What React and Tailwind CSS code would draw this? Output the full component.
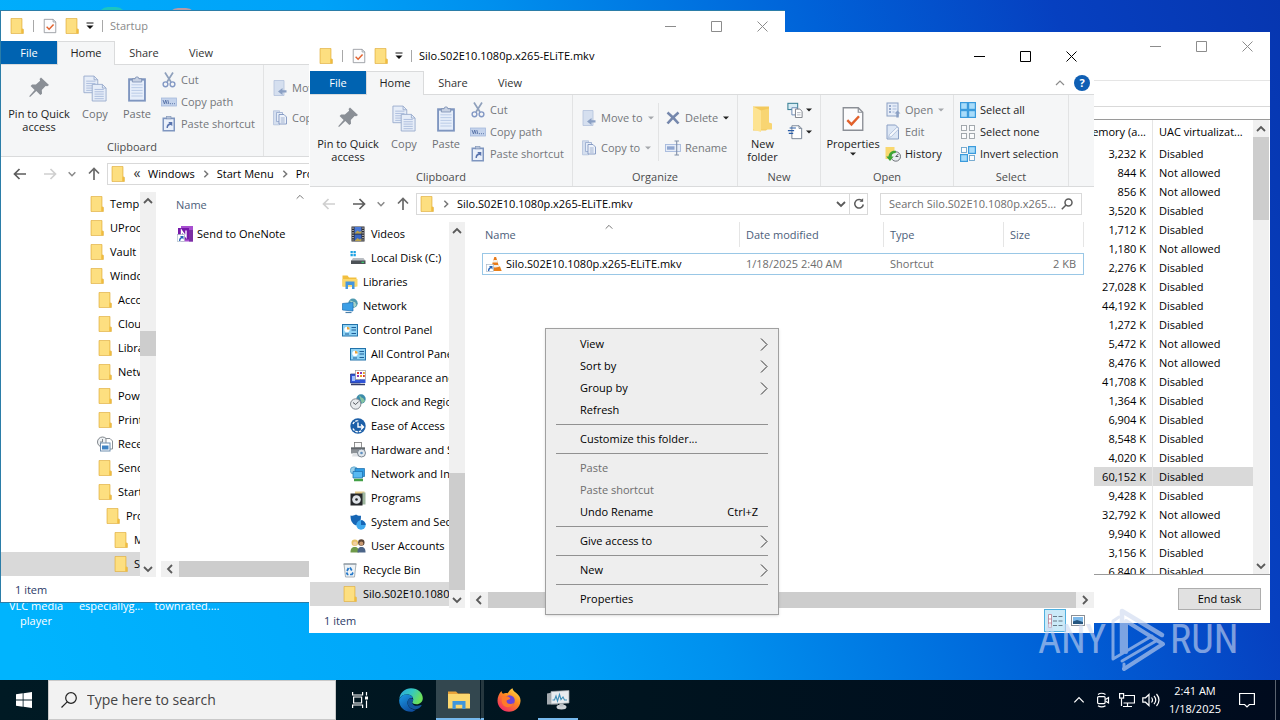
import React from 'react';

/* ---------- small icons ---------- */

function Folder({ className = 'w-4 h-4' }) {
  return (
    <svg viewBox="0 0 16 16" className={className} aria-hidden="true">
      <path d="M2 0.5h11v10.2l1.4 0.6v4.2H2z" fill="#f8d266" />
      <path d="M2.5 1h9.8v14h-9.8z" fill="#fddf80" />
      <path d="M12.3 10.5l1.8 1v3.8h-1.8z" fill="#f1bd3e" />
      <path d="M2 0.5h11v10.2l1.4 0.6v4.2H2z" fill="none" stroke="#e3b54a" strokeWidth="0.7" />
    </svg>
  );
}

function PropsIcon({ className = 'w-4 h-4' }) {
  return (
    <svg viewBox="0 0 16 18" className={className} aria-hidden="true">
      <path d="M1.5 1.5h10l3 3v12h-13z" fill="#fcfcfd" stroke="#8b8f96" strokeWidth="0.9" />
      <path d="M11.5 1.5v3h3" fill="none" stroke="#8b8f96" strokeWidth="0.8" />
      <path d="M4.2 9.8l2.8 2.8 5-5.4" fill="none" stroke="#e2612c" strokeWidth="1.6" />
    </svg>
  );
}

function PinIcon() {
  return (
    <svg viewBox="0 0 24 24" className="w-6 h-6" aria-hidden="true">
      <path d="M14 2.5L22 10l-1.8 1.3-1.6-.4-3.8 4.2.2 3.6-1.7 1.4-4-4L3 22l-.8-.7 5.4-6.4-4-3.8 1.5-1.6 3.8.1 4.2-3.8-.5-1.7z" fill="#8a8f96" />
    </svg>
  );
}

function SheetLines({ x, y }) {
  return (
    <g>
      <path d={`M${x} ${y}h11l4 4v14h-15z`} fill="#e6edf8" stroke="#9aaccd" strokeWidth="1" />
      <path d={`M${x + 11} ${y}v4h4`} fill="none" stroke="#9aaccd" strokeWidth="1" />
      <path d={`M${x + 2.5} ${y + 5.5}h10M${x + 2.5} ${y + 8}h10M${x + 2.5} ${y + 10.5}h10M${x + 2.5} ${y + 13}h10M${x + 2.5} ${y + 15.5}h10`} stroke="#a9bbdb" strokeWidth="1" />
    </g>
  );
}

function CopyIcon() {
  return (
    <svg viewBox="0 0 26 30" className="w-6 h-7" aria-hidden="true">
      <SheetLines x={1} y={1} />
      <SheetLines x={10} y={10} />
    </svg>
  );
}

function PasteIcon() {
  return (
    <svg viewBox="0 0 22 30" className="w-6 h-7" aria-hidden="true">
      <rect x="1.5" y="3.5" width="19" height="25" fill="#7f96c0" />
      <rect x="3.5" y="6" width="15" height="20.5" fill="#e6eefa" />
      <path d="M5 10.5h12M5 13.5h12M5 16.5h12M5 19.5h12M5 22.5h12" stroke="#b8c9e6" strokeWidth="1" />
      <path d="M6 4h3a2 2 0 0 1 4 0h3v3.5H6z" fill="#c8d2e4" stroke="#7388ad" strokeWidth="0.8" />
    </svg>
  );
}

function CutIcon() {
  return (
    <svg viewBox="0 0 16 16" className="w-4 h-4" aria-hidden="true">
      <path d="M4 0.5L10 10M12 0.5L6 10" stroke="#8fa0bc" strokeWidth="1.7" fill="none" />
      <circle cx="4.5" cy="12.3" r="2.4" fill="none" stroke="#8398c4" strokeWidth="1.4" />
      <circle cx="11.5" cy="12.3" r="2.4" fill="none" stroke="#8398c4" strokeWidth="1.4" />
    </svg>
  );
}

function CopyPathIcon() {
  return (
    <svg viewBox="0 0 16 16" className="w-4 h-4" aria-hidden="true">
      <rect x="0.5" y="4" width="15" height="8" fill="#c4d3ec" stroke="#a5b9dc" strokeWidth="0.8" />
      <path d="M2 6l1.5 4 1.2-4 1.3 4M6.8 6l1 4M9 9.7h1M11 9.7h1M13 9.7h1" stroke="#556fa5" strokeWidth="0.9" fill="none" />
    </svg>
  );
}

function PasteShortcutIcon() {
  return (
    <svg viewBox="0 0 16 16" className="w-4 h-4" aria-hidden="true">
      <rect x="1.5" y="1.5" width="12.5" height="14" fill="#7f96c0" />
      <rect x="3" y="3.2" width="9.5" height="10.8" fill="#eaf0fa" />
      <rect x="5.5" y="0.3" width="4.5" height="2.6" fill="#b6c3da" stroke="#7388ad" strokeWidth="0.5" />
      <path d="M5.5 12c0-3 1.200-4.200 3-4.400L7.300 6h4v4L9.800 8.900C7.700 9.200 6.900 10.300 6.900 12z" fill="#5873ad" />
    </svg>
  );
}

function MoveToIcon() {
  return (
    <svg viewBox="0 0 16 16" className="w-4 h-4" aria-hidden="true">
      <path d="M2 0.5h10v15H2z" fill="#d5dfef" stroke="#b3c2dc" strokeWidth="0.8" />
      <path d="M14.5 10.2v2.4h-4v2.3L6 11.4 10.5 8v2.2z" fill="#8ba0c4" />
    </svg>
  );
}

function CopyToIcon() {
  return (
    <svg viewBox="0 0 16 16" className="w-4 h-4" aria-hidden="true">
      <path d="M1.5 0.8h6v14h-6z" fill="#d5dfef" stroke="#b3c2dc" strokeWidth="0.8" />
      <path d="M4.5 2.5h6v9h-6z" fill="#e6edf8" stroke="#93a7cc" strokeWidth="0.8" />
      <path d="M7 4.5h5l2.5 2.5v7H7z" fill="#eef3fb" stroke="#7f95bf" strokeWidth="0.9" />
      <path d="M8.7 8h4M8.7 10h4M8.7 12h4" stroke="#8ba0c4" strokeWidth="0.8" />
    </svg>
  );
}

function DeleteIcon() {
  return (
    <svg viewBox="0 0 16 16" className="w-4 h-4" aria-hidden="true">
      <path d="M2.5 2.5C6 5.5 10.5 10 13.5 13.5M13.5 2.5C10 5.5 5.5 10 2.5 13.5" stroke="#7587ac" strokeWidth="2.6" fill="none" />
    </svg>
  );
}

function RenameIcon() {
  return (
    <svg viewBox="0 0 16 16" className="w-4 h-4" aria-hidden="true">
      <rect x="0.5" y="4.5" width="15" height="7" fill="#e6edf8" stroke="#a5b9dc" strokeWidth="0.9" />
      <rect x="2" y="6.3" width="7.5" height="3.4" fill="#8fa6d0" />
      <path d="M9.5 1h4.5M11.7 1v14M9.5 15h4.5" stroke="#7f8ea8" strokeWidth="1.1" />
    </svg>
  );
}

function BigFolder() {
  return (
    <svg viewBox="0 0 24 28" className="w-6 h-7" aria-hidden="true">
      <path d="M2 1.5h16v21l-3 3H2z" fill="#f3c95c" />
      <path d="M2 1.5l8 4v21.5l-8-2.5z" fill="#fde391" />
      <path d="M10 5.5l8-2v14l3 1v6h-11z" fill="#f8d572" />
    </svg>
  );
}

function NewItemIcon() {
  return (
    <svg viewBox="0 0 18 18" className="w-4 h-4" aria-hidden="true">
      <rect x="1" y="1.5" width="11" height="7" fill="#d8ecf4" stroke="#3c8296" strokeWidth="1.2" />
      <path d="M5.5 6.5h6v8h-6z" fill="#fff" stroke="#5d7fae" strokeWidth="1" />
      <path d="M9.5 8h5l2.5 2.5v7H9.5z" fill="#fff" stroke="#72777f" strokeWidth="1" />
      <path d="M11.3 12h4M11.3 14.5h4" stroke="#8e97a5" strokeWidth="0.8" />
    </svg>
  );
}

function EasyAccessIcon() {
  return (
    <svg viewBox="0 0 18 18" className="w-4 h-4" aria-hidden="true">
      <path d="M5.5 2h8l3 3v11.5h-11z" fill="#fff" stroke="#6d7a8c" strokeWidth="1" />
      <path d="M13.5 2v3h3" fill="none" stroke="#6d7a8c" strokeWidth="0.9" />
      <path d="M3 4.5h7M1 7.5h7M2 10.5h5" stroke="#2a5ea8" strokeWidth="1.4" />
    </svg>
  );
}

function OpenIcon() {
  return (
    <svg viewBox="0 0 16 16" className="w-4 h-4" aria-hidden="true">
      <rect x="2" y="1" width="11" height="13" fill="#e6edf8" stroke="#8ba0c4" strokeWidth="1" />
      <path d="M4 4h2M4 7h2M4 10h2" stroke="#7f95bf" strokeWidth="1.6" />
      <path d="M7.5 4h4M7.5 7h4M7.5 10h2" stroke="#a9bbdb" strokeWidth="1" />
      <path d="M12.5 8.5l3 3h-1.8v4h-2.4v-4H9.5z" fill="#8ba0c4" />
    </svg>
  );
}

function EditIcon() {
  return (
    <svg viewBox="0 0 16 16" className="w-4 h-4" aria-hidden="true">
      <path d="M2 1h8.500l3 3v11H2z" fill="#dde7f5" stroke="#8ba0c4" strokeWidth="1" />
      <path d="M3.500 13.500l1-3L12 3.200l1.800 1.700L6.300 12.600z" fill="#f6f9fd" stroke="#9db0d1" strokeWidth="0.7" />
    </svg>
  );
}

function HistoryIcon() {
  return (
    <svg viewBox="0 0 16 16" className="w-4 h-4" aria-hidden="true">
      <path d="M0.500 1h9v12h-9z" fill="#f9d86f" />
      <circle cx="10.800" cy="10.500" r="4.700" fill="#e9ecef" stroke="#62676e" strokeWidth="0.9" />
      <path d="M10.800 10.500l2.500-2.500M10.800 10.500h2.600" stroke="#44484e" strokeWidth="0.9" />
      <path d="M11 4.800C6.500 4 4 6.800 3.500 10.500H1.200L5 15l3.700-4.500H6.300c.3-2.200 1.800-3.600 4.400-3.500z" fill="#3fa535" />
    </svg>
  );
}

function SelectIcon({ kind }) {
  const on = kind === 'all' ? [1, 1, 1, 1] : kind === 'none' ? [0, 0, 0, 0] : [0, 1, 1, 0];
  const spots = [[1, 1], [9, 1], [1, 9], [9, 9]];
  return (
    <svg viewBox="0 0 16 16" className="w-4 h-4" aria-hidden="true">
      {spots.map(([x, y], i) => (
        <rect key={i} x={on[i] ? x - 0.4 : x + 0.5} y={on[i] ? y - 0.4 : y + 0.5} width={on[i] ? 6.8 : 5} height={on[i] ? 6.8 : 5}
          fill={on[i] ? '#a9dcfa' : '#fbfcfd'} stroke={on[i] ? '#3b9bdc' : kind === 'invert' ? '#6ba4cc' : '#9aa0a6'} strokeWidth={on[i] ? 1.2 : 0.9} />
      ))}
    </svg>
  );
}

function Chevron({ dir = 'right', className = 'w-3 h-3', stroke = '#5a5a5a', weight = 1.4 }) {
  const d = {
    right: 'M4 2l4 4-4 4',
    left: 'M8 2L4 6l4 4',
    up: 'M2 8l4-4 4 4',
    down: 'M2 4l4 4 4-4',
  }[dir];
  return (
    <svg viewBox="0 0 12 12" className={className} aria-hidden="true">
      <path d={d} fill="none" stroke={stroke} strokeWidth={weight} />
    </svg>
  );
}

function Caret({ color = '#222' }) {
  return (
    <svg viewBox="0 0 8 8" className="w-2 h-2" aria-hidden="true">
      <path d="M1 2.500h6L4 5.500z" fill={color} />
    </svg>
  );
}

function NavArrow({ dir, color }) {
  const d = { left: 'M14 8H2.500M7.500 3L2.500 8l5 5', right: 'M2 8h11.500M8.500 3l5 5-5 5', up: 'M8 14V3M3 7.500L8 2.500l5 5' }[dir];
  return (
    <svg viewBox="0 0 16 16" className="w-4 h-4" aria-hidden="true">
      <path d={d} fill="none" stroke={color} strokeWidth="1.7" />
    </svg>
  );
}

/* ---------- navigation tree icons ---------- */

const treeArt = {
  recent: (
    <>
      <circle cx="5.500" cy="6" r="5" fill="#eef1f3" stroke="#80868c" />
      <path d="M5.500 3v3H3" stroke="#80868c" fill="none" />
      <path d="M9 2.500h4l2.500 2.500v8H9z" fill="#fff" stroke="#8b9096" />
      <rect x="3.500" y="7" width="9.500" height="8" fill="#fff" stroke="#6f8fb0" />
      <rect x="5" y="9.500" width="6.500" height="4" fill="#3f83c4" />
    </>
  ),
  videos: (
    <>
      <rect x="1.500" y="0.500" width="13" height="15" fill="#2b2b30" />
      <rect x="4.500" y="1" width="7" height="6.500" fill="#4a78d6" />
      <rect x="4.500" y="8.500" width="7" height="6.500" fill="#3a66c4" />
      <path d="M4.500 7.500l3-3 2 1.500 2-1v2.500zM4.500 15l3-3 2 1.500 2-1V15z" fill="#b9a04a" />
      <path d="M3 1.500v13M13 1.500v13" stroke="#e6e6e6" strokeWidth="1.2" strokeDasharray="1.2 1.2" />
    </>
  ),
  disk: (
    <>
      <path d="M0.500 1h2.300v2.300H0.500zM3.500 1h2.300v2.300H3.500zM0.500 4h2.300v2.300H0.500zM3.500 4h2.300v2.300H3.500z" fill="#1ba1e2" />
      <path d="M3 8h10.500l2 3H1z" fill="#b9bdc2" />
      <rect x="1" y="10.500" width="14.500" height="3.500" fill="#4c5156" />
      <rect x="11.500" y="11.700" width="2.500" height="1.200" fill="#3bd16f" />
    </>
  ),
  libraries: (
    <>
      <path d="M0.500 1.500h5l1.500 2h7.500v9H0.500z" fill="#f2bf3e" />
      <path d="M0.500 5h15v7.500h-15z" fill="#fbd86d" />
      <path d="M3.500 7.500h9v7.500h-2.500v-4h-4v4H3.500z" fill="#4596de" />
    </>
  ),
  network: (
    <>
      <circle cx="11" cy="5.200" r="4.700" fill="#4f9ab0" />
      <path d="M8 2.500c2 0 3 2 5 1.500l1.500 3-2 2.500-3-3z" fill="#a9d3c8" />
      <path d="M0.500 5.500l10.500-1v8.500L0.500 12z" fill="#3b9fe6" stroke="#1c6fb3" strokeWidth="0.7" />
      <path d="M3.500 14.500h6" stroke="#4a7fa8" strokeWidth="1.2" />
    </>
  ),
  control: (
    <>
      <rect x="0.500" y="2.500" width="15" height="11.500" fill="#8ed2f4" stroke="#2272aa" />
      <circle cx="5" cy="7.500" r="2.700" fill="#fff" />
      <path d="M5 7.500V4.800a2.700 2.700 0 0 1 2.700 2.700z" fill="#e8a33a" />
      <path d="M9.500 5.500h4.500M9.500 8h4.500M3 12h4M9.500 11.500h4.500" stroke="#1f5f99" strokeWidth="1.2" />
    </>
  ),
  appearance: (
    <>
      <path d="M0.500 4h10v9h-10z" fill="#2f54d6" stroke="#20307c" strokeWidth="0.7" />
      <path d="M2 6h3v5H2z" fill="#9fc0ff" />
      <rect x="5.500" y="0.500" width="10" height="9" fill="#fff" stroke="#999" strokeWidth="0.7" />
      <path d="M7 2h2v2H7zM13 5h1.800v2H13z" fill="#d93a2b" />
      <path d="M10 2h2v2h-2zM7 5h2v2H7z" fill="#8a3bb8" />
      <path d="M13 2h1.800v2H13zM10 5h2v2h-2z" fill="#e89d27" />
      <path d="M10 9.500h5.500v3.500H10z" fill="#2f54d6" />
      <path d="M1 14.500h14" stroke="#333b66" strokeWidth="1.5" />
    </>
  ),
  clock: (
    <>
      <circle cx="11" cy="5" r="4.700" fill="#3c8cab" />
      <path d="M9 1.500c2 .5 2 2.500 4 2.500l2 3-3 2.500z" fill="#88c4a0" />
      <circle cx="5.700" cy="10" r="5.200" fill="#e8ebee" stroke="#83898f" />
      <path d="M3 8.500l2.700 2 3-3" stroke="#54595f" fill="none" />
    </>
  ),
  ease: (
    <>
      <circle cx="8" cy="8" r="7.700" fill="#1c5fa8" />
      <path d="M3 6A5.500 5.500 0 0 1 9 2.700M3 10.500A5.500 5.500 0 0 0 12 12" stroke="#fff" strokeWidth="1.4" fill="none" strokeDasharray="2.500 1" />
      <path d="M8 4.500V9h5M11 6.500L13.500 9 11 11.500" stroke="#fff" strokeWidth="1.4" fill="none" />
    </>
  ),
  hardware: (
    <>
      <rect x="4.500" y="0.500" width="7" height="5.500" fill="#fafafa" stroke="#777" strokeWidth="0.8" />
      <path d="M1 5.500h14v6H1z" fill="#8d9297" />
      <path d="M1 5.500h14v1.800H1z" fill="#61666b" />
      <path d="M3 11h7v3.500H2z" fill="#dfe2e5" />
      <circle cx="11.500" cy="11" r="4" fill="#dfe6ec" stroke="#6f7a86" strokeWidth="0.9" />
      <circle cx="11.500" cy="11" r="1.300" fill="#5f8fc0" />
    </>
  ),
  netint: (
    <>
      <circle cx="4" cy="4.500" r="3.700" fill="#9bd0ea" stroke="#4b98c4" strokeWidth="0.7" />
      <path d="M5 2.500h9.500v8H5z" fill="#2d9be3" stroke="#1a6cab" strokeWidth="0.7" />
      <path d="M3 5.500h9.500v6.500H3z" fill="#58b9f2" stroke="#1a6cab" strokeWidth="0.7" />
      <path d="M4 14h9" stroke="#43a047" strokeWidth="2.5" />
    </>
  ),
  programs: (
    <>
      <path d="M5 1.500h9.500v12H5z" fill="#e3c987" />
      <path d="M12 2.500h3.500v12H12z" fill="#9fb7a0" />
      <rect x="0.500" y="3.500" width="12" height="12" fill="#26282b" />
      <circle cx="6.500" cy="9.500" r="4.300" fill="#dfe3e8" />
      <circle cx="6.500" cy="9.500" r="1.300" fill="#26282b" />
    </>
  ),
  system: (
    <>
      <path d="M0.500 1.500C3 2 4.500 1.500 6 0.500c1.500 1 3 1.500 5 1.200 0 5-1 8-5 9.800C2 9.700.500 6.500.500 1.500z" fill="#1766b5" />
      <circle cx="11" cy="11" r="4.700" fill="#3fa9ee" />
      <path d="M11 11V6.300a4.700 4.700 0 0 1 4.700 4.700z" fill="#1766b5" />
    </>
  ),
  users: (
    <>
      <circle cx="4.800" cy="4.800" r="3.300" fill="#e6c36a" />
      <circle cx="5" cy="5.500" r="2" fill="#f0cfa6" />
      <path d="M0.500 14.500c0-4 1.500-5.500 4.300-5.500s4 1.500 4 5.500z" fill="#6f9a4a" />
      <circle cx="11.300" cy="4.500" r="3.200" fill="#5a4334" />
      <circle cx="11.300" cy="5.500" r="2" fill="#c99a72" />
      <path d="M7.500 14.500c0-4 1.200-5.500 3.900-5.500s4.100 1.500 4.100 5.500z" fill="#4b6487" />
    </>
  ),
  bin: (
    <>
      <path d="M2 2h12l-1.500 13h-9z" fill="#eef3f6" stroke="#9fa9b1" strokeWidth="0.9" />
      <path d="M1.500 2h13" stroke="#8c969e" strokeWidth="1.2" />
      <path d="M8 5.500l1.800 3M11 10.500l-1 2H8M6.500 12.500h-1l-1-2M5 9l1.500-3" stroke="#2377c9" strokeWidth="1.7" fill="none" />
    </>
  ),
};

function TreeIcon({ name }) {
  if (name === 'folder') return <Folder className="w-4 h-4 shrink-0" />;
  return (
    <svg viewBox="0 0 16 16" className="w-4 h-4 shrink-0" aria-hidden="true">
      {treeArt[name]}
    </svg>
  );
}

/* ---------- window pieces ---------- */

function CaptionButtons({ color }) {
  const marks = [
    ['Minimize', <path key="p" d="M0 6.500h11" />],
    ['Maximize', <path key="p" d="M0.500 1.500h10v10h-10z" />],
    ['Close', <path key="p" d="M0.500 1.500l10 10M10.500 1.500l-10 10" />],
  ];
  return (
    <div className="ml-auto flex self-stretch">
      {marks.map(([label, mark]) => (
        <button key={label} type="button" aria-label={label} className="flex w-[46px] items-center justify-center">
          <svg viewBox="0 0 11 13" className="h-[13px] w-[11px]" fill="none" stroke={color} strokeWidth="1" aria-hidden="true">
            {mark}
          </svg>
        </button>
      ))}
    </div>
  );
}

function TitleBar({ title, active }) {
  return (
    <header className="flex h-[30px] shrink-0 items-center pl-2">
      <Folder className="h-4 w-4" />
      <span className="ml-2 h-3 w-px bg-[#a8a8a8]" />
      <button type="button" aria-label="Properties" className="ml-2 flex w-4 justify-center"><PropsIcon /></button>
      <button type="button" aria-label="New folder" className="ml-1.5"><Folder className="h-4 w-4" /></button>
      <button type="button" aria-label="Customize Quick Access Toolbar" className="ml-1.5">
        <svg viewBox="0 0 8 8" className="h-2 w-2" aria-hidden="true">
          <path d="M0.500 1h7" stroke="#111" />
          <path d="M0.500 3.500h7L4 7z" fill="#111" />
        </svg>
      </button>
      <span className="ml-2 h-3 w-px bg-[#a8a8a8]" />
      <h1 className={active ? 'ml-[7px] whitespace-nowrap text-black' : 'ml-[7px] whitespace-nowrap text-[#8a8a8a]'}>{title}</h1>
      <CaptionButtons color={active ? '#000' : '#8c8c8c'} />
    </header>
  );
}

function TabStrip() {
  return (
    <nav className="flex h-6 shrink-0 items-stretch border-b border-[#dadbdc]">
      <button type="button" className="w-14 bg-[#0063b1] text-white">File</button>
      <button type="button" className="-mb-px w-[58px] border-x border-t border-[#dadbdc] bg-[#f5f6f7] pb-0.5 text-[#222]">Home</button>
      <button type="button" className="w-[58px] text-[#333]">Share</button>
      <button type="button" className="w-14 text-[#333]">View</button>
      <div className="ml-auto flex items-center gap-2 pr-1">
        <button type="button" aria-label="Minimize the Ribbon"><Chevron dir="up" stroke="#8c8c8c" weight={1.2} /></button>
        <button type="button" aria-label="Help" className="flex h-4 w-4 items-center justify-center rounded-full bg-[#0f5fb4] font-bold text-white">?</button>
      </div>
    </nav>
  );
}

function Group({ label, width, children }) {
  return (
    <section className={`flex shrink-0 flex-col border-r border-[#e2e3e4] ${width}`}>
      <div className="flex flex-1">{children}</div>
      <p className="pb-px text-center leading-4 text-[#4c4c4c]">{label}</p>
    </section>
  );
}

function BigButton({ icon, lines, width, muted, caret }) {
  return (
    <button type="button" className={`flex shrink-0 flex-col items-center justify-start pt-2.5 leading-[13px] ${width} ${muted ? 'text-[#6d7074]' : 'text-[#222]'}`}>
      <span className="flex h-8 items-start">{icon}</span>
      {lines.map((l) => <span key={l} className="whitespace-nowrap">{l}</span>)}
      {caret && <Caret />}
    </button>
  );
}

function SmallButton({ icon, label, muted, caret, caretColor }) {
  return (
    <button type="button" className={`flex h-[22px] items-center gap-1 whitespace-nowrap ${muted ? 'text-[#74777b]' : 'text-[#222]'}`}>
      {icon}
      <span>{label}</span>
      {caret && <Caret color={caretColor} />}
    </button>
  );
}

function Ribbon() {
  return (
    <div className="flex h-[92px] shrink-0 border-b border-[#dadbdc] bg-[#f5f6f7]">
      <Group label="Clipboard" width="w-[263px]">
        <BigButton icon={<PinIcon />} lines={['Pin to Quick', 'access']} width="w-[76px]" />
        <BigButton icon={<CopyIcon />} lines={['Copy']} width="w-[36px]" muted />
        <BigButton icon={<PasteIcon />} lines={['Paste']} width="w-[48px]" muted />
        <div className="pt-1">
          <SmallButton icon={<CutIcon />} label="Cut" muted />
          <SmallButton icon={<CopyPathIcon />} label="Copy path" muted />
          <SmallButton icon={<PasteShortcutIcon />} label="Paste shortcut" muted />
        </div>
      </Group>
      <Group label="Organize" width="w-[165px]">
        <div className="my-2 w-[86px] space-y-2 border-r border-[#e2e3e4] pl-2 pt-1">
          <SmallButton icon={<MoveToIcon />} label="Move to" muted caret caretColor="#a5a8ac" />
          <SmallButton icon={<CopyToIcon />} label="Copy to" muted caret caretColor="#a5a8ac" />
        </div>
        <div className="my-2 space-y-2 pl-1.5 pt-1">
          <SmallButton icon={<DeleteIcon />} label="Delete" muted caret />
          <SmallButton icon={<RenameIcon />} label="Rename" muted />
        </div>
      </Group>
      <Group label="New" width="w-[83px]">
        <BigButton icon={<BigFolder />} lines={['New', 'folder']} width="w-[49px]" />
        <div className="pt-1">
          <button type="button" aria-label="New item" className="flex h-[22px] items-center gap-0.5"><NewItemIcon /><Caret /></button>
          <button type="button" aria-label="Easy access" className="flex h-[22px] items-center gap-0.5"><EasyAccessIcon /><Caret /></button>
        </div>
      </Group>
      <Group label="Open" width="w-[133px]">
        <BigButton icon={<PropsIcon className="h-7 w-6" />} lines={['Properties']} width="w-16" caret />
        <div className="pt-1">
          <SmallButton icon={<OpenIcon />} label="Open" muted caret caretColor="#a5a8ac" />
          <SmallButton icon={<EditIcon />} label="Edit" muted />
          <SmallButton icon={<HistoryIcon />} label="History" />
        </div>
      </Group>
      <Group label="Select" width="w-[115px]">
        <div className="pl-1.5 pt-1">
          <SmallButton icon={<SelectIcon kind="all" />} label="Select all" />
          <SmallButton icon={<SelectIcon kind="none" />} label="Select none" />
          <SmallButton icon={<SelectIcon kind="invert" />} label="Invert selection" />
        </div>
      </Group>
    </div>
  );
}

function AddressBar({ crumbs, search, back, searchId }) {
  return (
    <div className="flex h-[33px] shrink-0 items-center pr-3">
      <div className="flex w-[106px] shrink-0 items-center pl-[11px]">
        <button type="button" aria-label="Back" className="w-[30px]"><NavArrow dir="left" color={back ? '#5c5c5c' : '#cfcfcf'} /></button>
        <button type="button" aria-label="Forward" className="w-[25px]"><NavArrow dir="right" color={back ? '#cfcfcf' : '#5c5c5c'} /></button>
        <button type="button" aria-label="Recent locations" className="w-[19px]"><Chevron dir="down" className="h-2.5 w-2.5" stroke="#888" weight={1.8} /></button>
        <button type="button" aria-label="Up"><NavArrow dir="up" color="#6a6a6a" /></button>
      </div>
      <div className="flex h-[22px] min-w-0 flex-1 items-center border border-[#d9d9d9] pl-0.5">
        <Folder className="h-4 w-4 shrink-0" />
        {crumbs.map((c, i) => (
          <React.Fragment key={c}>
            <span className="flex w-[22px] shrink-0 items-center justify-center text-[#333]">
              {i === 0 && crumbs.length > 1 ? <span className="pb-0.5 text-sm leading-4">«</span> : <Chevron className="h-2.5 w-2.5" stroke="#777" weight={1.8} />}
            </span>
            <a href="#" className="whitespace-nowrap text-black">{c}</a>
          </React.Fragment>
        ))}
        <button type="button" aria-label="Previous locations" className="ml-auto px-0.5"><Chevron dir="down" weight={1.8} /></button>
        <button type="button" aria-label="Refresh" className="flex h-full w-[18px] items-center justify-center border-l border-[#d9d9d9]">
          <svg viewBox="0 0 12 12" className="h-3 w-3" aria-hidden="true">
            <path d="M9.500 3.200A4.300 4.300 0 1 0 10.300 6.500" fill="none" stroke="#5c5c5c" strokeWidth="1.5" />
            <path d="M6.500 3.800h3.600V0.300z" fill="#5c5c5c" />
          </svg>
        </button>
      </div>
      <label htmlFor={searchId} className="ml-3 flex h-[22px] w-[202px] shrink-0 items-center border border-[#d9d9d9] pl-2 pr-2">
        <input id={searchId} type="text" aria-label="Search" placeholder={search} className="min-w-0 flex-1 text-ellipsis bg-transparent outline-none placeholder:text-[#6d6d6d]" />
        <svg viewBox="0 0 12 12" className="ml-1 h-3 w-3 shrink-0" fill="none" stroke="#5c5c5c" strokeWidth="1.5" aria-hidden="true">
          <circle cx="7.500" cy="4.500" r="3.500" />
          <path d="M5 7L0.800 11.200" />
        </svg>
      </label>
    </div>
  );
}

function VScroll({ before, thumb }) {
  return (
    <div className="flex w-4 shrink-0 flex-col bg-[#f0f0f0]">
      <button type="button" aria-label="Scroll up" className="flex h-[17px] items-center justify-center"><Chevron dir="up" weight={1.8} /></button>
      <div className={`shrink-0 ${before}`} />
      <div className={`shrink-0 bg-[#cdcdcd] ${thumb}`} />
      <button type="button" aria-label="Scroll down" className="mt-auto flex h-[17px] items-center justify-center"><Chevron dir="down" weight={1.8} /></button>
    </div>
  );
}

function Tree({ items }) {
  return (
    <ul className="w-[139px] shrink-0 overflow-hidden">
      {items.map(([label, icon, pad, selected]) => (
        <li key={label}>
          <button type="button" className={`flex h-6 w-full items-center gap-[5px] overflow-hidden whitespace-nowrap text-left text-black ${pad} ${selected ? 'bg-[#d9d9d9]' : ''}`}>
            <TreeIcon name={icon} />
            <span>{label}</span>
          </button>
        </li>
      ))}
    </ul>
  );
}

function FileTable({ file, boxed }) {
  return (
    <table className="w-[602px] table-fixed border-separate border-spacing-0 text-left">
      <colgroup>
        <col className="w-[258px]" />
        <col className="w-[144px]" />
        <col className="w-[120px]" />
        <col className="w-20" />
      </colgroup>
      <thead>
        <tr className="h-[25px] text-[#4c607a]">
          <th className="relative border-r border-[#e5e5e5] pl-[3px] font-normal">
            Name
            <span className="absolute inset-x-0 top-0 flex justify-center pr-1"><Chevron dir="up" className="h-2.5 w-2.5" stroke="#777" weight={1.2} /></span>
          </th>
          <th className="border-r border-[#e5e5e5] pl-1.5 font-normal">Date modified</th>
          <th className="border-r border-[#e5e5e5] pl-1.5 font-normal">Type</th>
          <th className="border-r border-[#e5e5e5] pl-1.5 font-normal">Size</th>
        </tr>
      </thead>
      <tbody>
        <tr className="h-1.5"><td colSpan={4} /></tr>
        <tr className={`h-[22px] text-[#6d6d6d] ${boxed ? 'outline-1 -outline-offset-1 outline-[#99c7e6]' : ''}`}>
          <td className="py-0 pl-1">
            <span className="flex items-center gap-1 whitespace-nowrap text-black">{file.icon}{file.name}</span>
          </td>
          <td className="py-0 pl-1.5">{file.date}</td>
          <td className="py-0 pl-1.5">{file.type}</td>
          <td className="py-0 pr-2 text-right">{file.size}</td>
        </tr>
      </tbody>
    </table>
  );
}

function Explorer({ title, active, frame, place, crumbs, search, searchId, back, tree, scroll, file }) {
  return (
    <section aria-label={title} className={`absolute flex h-[593px] w-[785px] flex-col border-l border-t bg-white ${frame} ${place}`}>
      <TitleBar title={title} active={active} />
      <TabStrip />
      <Ribbon />
      <AddressBar crumbs={crumbs} search={search} back={back} searchId={searchId} />
      <div className="flex min-h-0 flex-1 pt-0.5">
        <Tree items={tree} />
        <VScroll {...scroll} />
        <div className="flex min-w-0 flex-1 flex-col pl-[5px]">
          <div className="flex-1 pl-3"><FileTable file={file} boxed={active} /></div>
          <div className="flex h-4 bg-[#f0f0f0]">
            <button type="button" aria-label="Scroll left" className="flex w-[18px] items-center justify-center"><Chevron dir="left" weight={1.8} /></button>
            <div className="flex-1 bg-[#cdcdcd]" />
            <button type="button" aria-label="Scroll right" className="flex w-[18px] items-center justify-center"><Chevron weight={1.8} /></button>
          </div>
        </div>
      </div>
      <footer className="flex h-[25px] shrink-0 items-center pl-3.5 pr-2 text-[#2b3a67]">
        <span>1 item</span>
        <div className="ml-auto flex items-center gap-1">
          <button type="button" aria-label="Details view" className="flex h-[23px] w-[22px] items-center justify-center border border-[#4fb0e0] bg-[#cbeaf8]">
            <svg viewBox="0 0 16 14" className="h-3.5 w-4" aria-hidden="true">
              <path d="M1.500 0.500h3v13h-3z" fill="#fff" stroke="#b77a8e" strokeWidth="0.8" />
              <path d="M1.500 5h3M1.500 9h3" stroke="#b77a8e" strokeWidth="0.8" />
              <path d="M6 2.500h4M11.500 2.500h4M6 7h4M11.500 7h4M6 11.500h4M11.500 11.500h4" stroke="#667a88" />
            </svg>
          </button>
          <button type="button" aria-label="Large icons view" className="flex h-[23px] w-4 items-center justify-center">
            <svg viewBox="0 0 14 11" className="h-[11px] w-3.5" aria-hidden="true">
              <rect x="0.500" y="0.500" width="13" height="10" fill="#fff" stroke="#8a8f96" />
              <rect x="2" y="2" width="10" height="7" fill="#7db9ea" />
              <path d="M2 9V6.500l4-1.500 6 2v2z" fill="#27567f" />
            </svg>
          </button>
        </div>
      </footer>
    </section>
  );
}

/* ---------- task manager ---------- */

const processes = [
  ['3,232 K', 'Disabled'], ['844 K', 'Not allowed'], ['856 K', 'Not allowed'], ['3,520 K', 'Disabled'],
  ['1,712 K', 'Disabled'], ['1,180 K', 'Not allowed'], ['2,276 K', 'Disabled'], ['27,028 K', 'Disabled'],
  ['44,192 K', 'Disabled'], ['1,272 K', 'Disabled'], ['5,472 K', 'Not allowed'], ['8,476 K', 'Not allowed'],
  ['41,708 K', 'Disabled'], ['1,364 K', 'Disabled'], ['6,904 K', 'Disabled'], ['8,548 K', 'Disabled'],
  ['4,020 K', 'Disabled'], ['60,152 K', 'Disabled'], ['9,428 K', 'Disabled'], ['32,792 K', 'Not allowed'],
  ['9,940 K', 'Not allowed'], ['3,156 K', 'Disabled'], ['6,840 K', 'Disabled'],
];

function TaskManager() {
  return (
    <section aria-label="Task Manager" className="absolute left-[770px] top-8 flex h-[591px] w-[500px] flex-col bg-white">
      <header className="flex h-7 shrink-0"><CaptionButtons color="#8c8c8c" /></header>
      <div className="h-[21px] shrink-0 border-b border-[#e5e5e5]" />
      <div className="h-[26px] shrink-0 border-b border-[#d9d9d9]" />
      <div className="h-3 shrink-0" />
      <div className="flex min-h-0 flex-1 border-y border-[#9a9a9a]">
        <div className="min-w-0 flex-1 overflow-hidden">
          <table className="w-full table-fixed border-separate border-spacing-0 text-black">
            <thead>
              <tr className="h-6">
                <th className="w-[383px] border-r border-[#e5e5e5] p-0 pr-1.5 text-right font-normal">Memory (a...</th>
                <th className="p-0 pl-1.5 text-left font-normal">UAC virtualizat...</th>
              </tr>
            </thead>
            <tbody>
              {processes.map(([mem, uac]) => (
                <tr key={mem} className={mem === '60,152 K' ? 'h-[19px] bg-[#d9d9d9]' : 'h-[19px]'}>
                  <td className="border-r border-[#e5e5e5] p-0 pr-1.5 text-right">{mem}</td>
                  <td className="p-0 pl-1.5">{uac}</td>
                </tr>
              ))}
            </tbody>
          </table>
        </div>
        <VScroll before="h-0" thumb="h-[83px]" />
        <div className="w-px" />
      </div>
      <footer className="flex h-12 shrink-0 items-center justify-end pr-[9px]">
        <button type="button" className="h-[22px] w-[83px] border border-[#adadad] bg-[#e1e1e1] text-black">End task</button>
      </footer>
    </section>
  );
}

/* ---------- context menu ---------- */

const menuGroups = [
  [['View', '>'], ['Sort by', '>'], ['Group by', '>'], ['Refresh']],
  [['Customize this folder...']],
  [['Paste', null, true], ['Paste shortcut', null, true], ['Undo Rename', 'Ctrl+Z']],
  [['Give access to', '>']],
  [['New', '>']],
  [['Properties']],
];

function ContextMenu() {
  return (
    <div role="menu" className="absolute left-[545px] top-[328px] w-[234px] border border-[#a0a0a0] bg-[#eeeeee] py-1 shadow-sm">
      {menuGroups.map((items, g) => (
        <div key={g}>
          {g > 0 && <div className="mx-2.5 my-[3px] h-px bg-[#919191]" />}
          {items.map(([label, hint, off]) => (
            <button key={label} role="menuitem" type="button" disabled={off} className="flex h-[22px] w-full items-center justify-between pl-[34px] pr-2.5 text-left text-black disabled:text-[#6d6d6d]">
              <span>{label}</span>
              {hint === '>' && (
                <svg viewBox="0 0 8 13" className="h-[13px] w-2" aria-hidden="true">
                  <path d="M1 0.500l6 6-6 6" fill="none" stroke="#333" strokeWidth="1" />
                </svg>
              )}
              {hint && hint !== '>' && <span className="pr-2.5">{hint}</span>}
            </button>
          ))}
        </div>
      ))}
    </div>
  );
}

/* ---------- taskbar ---------- */

function Taskbar() {
  return (
    <footer className="relative flex h-10 shrink-0 bg-[linear-gradient(90deg,#001a24,#00141f_50%,#000b1e)] text-white">
      <button type="button" aria-label="Start" className="flex w-12 items-center justify-center">
        <svg viewBox="0 0 16 16" className="h-4 w-4" fill="#fff" aria-hidden="true">
          <path d="M0 2.200L6.700 1.300v6.200H0zM7.500 1.200L16 0v7.500H7.500zM0 8.400h6.700v6.300L0 13.800zM7.500 8.400H16V16l-8.500-1.200z" />
        </svg>
      </button>
      <label htmlFor="desktop-search" className="flex w-72 items-center border border-[#c9c9c9] bg-[#f2f2f2] pl-3">
        <svg viewBox="0 0 16 16" className="h-4 w-4" fill="none" stroke="#222" strokeWidth="1.2" aria-hidden="true">
          <circle cx="10" cy="6" r="5.300" />
          <path d="M6.200 9.800L0.500 15.500" />
        </svg>
        <input id="desktop-search" type="text" aria-label="Type here to search" placeholder="Type here to search" className="ml-2.5 min-w-0 flex-1 bg-transparent text-sm text-black outline-none placeholder:text-[#444]" />
      </label>
      <button type="button" aria-label="Task View" className="flex w-12 items-center justify-center">
        <svg viewBox="0 0 16 16" className="h-4 w-4" fill="none" stroke="#fff" strokeWidth="1.2" aria-hidden="true">
          <path d="M0.600 0v3h10V0M0.600 16v-3h10v3M1.600 5h8v6h-8zM14.500 0v3.500M14.500 8.500V16" />
          <path d="M14.500 4.500v3" strokeWidth="3" />
        </svg>
      </button>
      <button type="button" aria-label="Microsoft Edge" className="flex w-[52px] items-center justify-center pl-0.5">
        <svg viewBox="0 0 24 24" className="h-6 w-6" aria-hidden="true">
          <defs>
            <linearGradient id="edgeTop" x1="0" y1="0" x2="1" y2="0.400">
              <stop offset="0" stopColor="#2aa5e0" /><stop offset="0.550" stopColor="#35c8c0" /><stop offset="1" stopColor="#6be05a" />
            </linearGradient>
            <linearGradient id="edgeSwirl" x1="0" y1="0" x2="0.600" y2="1">
              <stop offset="0" stopColor="#1a9be6" /><stop offset="1" stopColor="#0f4fa0" />
            </linearGradient>
          </defs>
          <path d="M0.300 11C1 4.500 6 .2 12 .2c7 0 11.800 4.800 11.800 10 0 3.600-2.800 6-6.300 6-3 0-4.300-1.200-4.300-2 0-.8 1-1 1-3C14.200 8.500 11.500 6.500 8 6.500 4 6.500 1.500 8.500.3 11z" fill="url(#edgeTop)" />
          <path d="M0.200 12C1 8.500 4.200 6.500 8 6.500c3 0 5.500 1.600 6.100 3.700C11 9 8.500 11.500 8.500 14.500c0 4.500 4 7.500 8.500 7-1.500 1.500-3.500 2.300-5 2.300C5 23.800-.2 18.500.2 12z" fill="url(#edgeSwirl)" />
          <path d="M8.500 14.500c0 5 5.500 7.500 9.500 6.500 2-.5 3.500-1.800 4.500-3.300.3-.5-.1-.8-.6-.6-4.500 1.800-8.700.3-8.700-2.900 0-.8 1-1 1-3-.5-.7-1.200-1-2.200-1-2 0-3.500 2-3.500 4.300z" fill="#12579f" />
        </svg>
      </button>
      <button type="button" aria-label="File Explorer" className="flex w-11 items-center justify-center border-b-2 border-[#76b9ed] bg-[#33474f] pl-0.5 pt-0.5">
        <svg viewBox="0 0 22 20" className="h-5 w-[22px]" aria-hidden="true">
          <path d="M0 1.500h8l2 2h11.500v4H0z" fill="#e9a33a" />
          <path d="M0 4h22v14.500H0z" fill="#fbd76f" />
          <path d="M4.500 11h13v8h-3.200v-4.200H7.700V19H4.500z" fill="#3f96dc" />
        </svg>
      </button>
      <span className="w-1 border-b-2 border-l border-[#76b9ed] border-l-[#00141f] bg-[#26383f]" />
      <button type="button" aria-label="Firefox" className="flex w-[50px] items-center justify-center">
        <svg viewBox="0 0 24 24" className="h-6 w-6" aria-hidden="true">
          <defs>
            <linearGradient id="fox" x1="0.900" y1="0" x2="0.200" y2="1">
              <stop offset="0" stopColor="#ffe14a" /><stop offset="0.450" stopColor="#ff8a1e" /><stop offset="1" stopColor="#f0256b" />
            </linearGradient>
          </defs>
          <path d="M4.500 3c.2 1.500.8 2.300 1.500 2.700C7.500 5 9 4.800 10.500 5.200 12 3 13.500 1.500 15.500.300c.3 2 1.500 3 3.500 4.500 3 2.300 4.800 5 4.500 8.500-.5 6-5.300 10.500-11.500 10.500S.500 19 .500 12.800C.500 9 2 5.500 4.500 3z" fill="url(#fox)" />
          <circle cx="12.500" cy="12.500" r="5.300" fill="#6b45d8" />
          <path d="M5 9c3-1.800 6.500-.5 8 1 .8.800-1.200 2-3.200 2.200-1.300 3.500 3.700 5.300 7.200 2.300-1.500 4.500-6 5.500-9 4C5 17 4 13 5 9z" fill="#ff7a2a" />
        </svg>
      </button>
      <button type="button" aria-label="Task Manager" className="mx-1 flex w-10 items-center justify-center border-b-2 border-[#76b9ed] pt-0.5">
        <svg viewBox="0 0 24 22" className="h-[22px] w-6" aria-hidden="true">
          <path d="M1 4.500l11-2v13L1 15.500z" fill="#a4abb0" />
          <path d="M5 2.500l18-1v12.500L5 15z" fill="#e8ecef" stroke="#9aa0a5" strokeWidth="0.7" />
          <path d="M6.500 11h2l1.500-4L11.500 12l2-6.500 1.500 5L17 8l1.500 3H21" fill="none" stroke="#3f8fb8" strokeWidth="1.1" />
          <ellipse cx="15.500" cy="18" rx="5" ry="2.500" fill="#cdd2d6" />
          <path d="M13.500 14.500h4v3h-4z" fill="#b8bec3" />
        </svg>
      </button>
      <div className="ml-auto flex items-center">
        <button type="button" aria-label="Show hidden icons" className="flex w-6 justify-center"><Chevron dir="up" className="h-3.5 w-3.5" stroke="#fff" weight={1.1} /></button>
        <button type="button" aria-label="Meet Now" className="flex w-6 justify-center">
          <svg viewBox="0 0 16 16" className="h-4 w-4" fill="none" stroke="#fff" strokeWidth="1.2" aria-hidden="true">
            <rect x="2.600" y="4.600" width="7.500" height="7" rx="1" />
            <path d="M10.500 7.500l3-2v5.500l-3-2M3 2.500q3.500-2.500 7.500 0M3 13.700q3.500 2.500 7.500 0" />
          </svg>
        </button>
        <button type="button" aria-label="Network" className="flex w-6 justify-center">
          <svg viewBox="0 0 16 16" className="h-4 w-4" fill="none" stroke="#fff" strokeWidth="1.2" aria-hidden="true">
            <path d="M5.500 3.500h10v7.500H4.500M4 14.500h9M8.500 11v3.500M2.500 6.500V14" />
            <rect x="0.600" y="1.600" width="4" height="4.500" />
          </svg>
        </button>
        <button type="button" aria-label="Volume" className="flex w-6 justify-center">
          <svg viewBox="0 0 18 16" className="h-4 w-[18px]" fill="none" stroke="#fff" strokeWidth="1.2" aria-hidden="true">
            <path d="M0.800 5.800h2.700L7 2.500v11l-3.500-3.300H0.800zM9.500 5.500q2 2.500 0 5M12 3.800q3.500 4.200 0 8.400M14.500 2q5 6 0 12" />
          </svg>
        </button>
        <button type="button" className="w-16 text-center leading-[18px]">2:41 AM<br />1/18/2025</button>
        <button type="button" aria-label="Notifications" className="flex w-10 justify-center">
          <svg viewBox="0 0 16 16" className="h-4 w-4" fill="none" stroke="#fff" strokeWidth="1.2" aria-hidden="true">
            <path d="M0.600 1.500h14.800v11h-5L8 15l-2.400-2.500h-5z" />
          </svg>
        </button>
        <button type="button" aria-label="Show desktop" className="ml-2 h-10 w-[5px] border-l border-[#5b6470]" />
      </div>
    </footer>
  );
}

/* ---------- page ---------- */

const startupTree = [
  ['Temp', 'folder', 'pl-[88px]'], ['UProof', 'folder', 'pl-[88px]'], ['Vault', 'folder', 'pl-[88px]'], ['Windows', 'folder', 'pl-[88px]'],
  ['Account Pictures', 'folder', 'pl-24'], ['CloudStore', 'folder', 'pl-24'], ['Libraries', 'folder', 'pl-24'],
  ['Network Shortcuts', 'folder', 'pl-24'], ['PowerShell', 'folder', 'pl-24'], ['Printer Shortcuts', 'folder', 'pl-24'],
  ['Recent', 'recent', 'pl-24'], ['SendTo', 'folder', 'pl-24'], ['Start Menu', 'folder', 'pl-24'],
  ['Programs', 'folder', 'pl-[104px]'], ['Maintenance', 'folder', 'pl-28'], ['Startup', 'folder', 'pl-28', true],
];

const siloTree = [
  ['Videos', 'videos', 'pl-10'], ['Local Disk (C:)', 'disk', 'pl-10'], ['Libraries', 'libraries', 'pl-8'],
  ['Network', 'network', 'pl-8'], ['Control Panel', 'control', 'pl-8'], ['All Control Panel Items', 'control', 'pl-10'],
  ['Appearance and Personalization', 'appearance', 'pl-10'], ['Clock and Region', 'clock', 'pl-10'],
  ['Ease of Access', 'ease', 'pl-10'], ['Hardware and Sound', 'hardware', 'pl-10'],
  ['Network and Internet', 'netint', 'pl-10'], ['Programs', 'programs', 'pl-10'],
  ['System and Security', 'system', 'pl-10'], ['User Accounts', 'users', 'pl-10'],
  ['Recycle Bin', 'bin', 'pl-8'], ['Silo.S02E10.1080p.x265-ELiTE.mkv', 'folder', 'pl-8', true],
];

const shortcutArrow = (
  <>
    <rect x="0.500" y="8.500" width="7" height="7" fill="#fff" stroke="#9fb0c0" strokeWidth="0.6" />
    <path d="M2 15c0-2.600 1-3.500 2.200-3.700L3 10h3.500v3.500l-1.200-1.200C4 12.600 3.300 13.500 3.300 15z" fill="#2563b8" />
  </>
);

const oneNote = (
  <svg viewBox="0 0 16 16" className="h-4 w-4" aria-hidden="true">
    <rect x="4" y="0" width="12" height="15.500" fill="#a84fd0" />
    <rect x="12" y="4" width="4" height="11.500" fill="#7b2fa3" />
    <rect x="1" y="2" width="11" height="11.500" fill="#7719aa" />
    <path d="M4.500 11V4.500l4.500 6.300V4.500" fill="none" stroke="#fff" strokeWidth="1.4" />
    {shortcutArrow}
  </svg>
);

const vlc = (
  <svg viewBox="0 0 16 16" className="h-4 w-4" aria-hidden="true">
    <path d="M4 10.500h10l1.700 4.500H3z" fill="#e8801a" />
    <path d="M8.300 1h1.800l3.400 11.500c-2.500 1.200-6 1.200-8.500 0z" fill="#e87a1a" />
    <path d="M7.400 4h3.600l.8 2.500H6.700zM5.900 9h6.700l.5 1.800c-2.500.8-5.500.8-7.700 0z" fill="#f4f0ec" />
    {shortcutArrow}
  </svg>
);

export default function App() {
  return (
    <div className="flex h-screen w-full flex-col overflow-hidden font-['Open_Sans','Noto_Sans',sans-serif] text-[11px] leading-4">
      <main className="relative min-h-0 flex-1 bg-[linear-gradient(70deg,#00b4fe_2%,#00a2f8_37%,#0090ee_48%,#0062d8_69%,#0640c0_85%,#0636b0_100%)]">
        <div className="absolute left-[98px] top-[7px] h-5 w-7 rounded-full bg-[#1cc5c0]" />
        <div className="absolute left-[168px] top-[8px] h-5 w-7 rounded-full bg-[#b79aa6]" />
        <div className="absolute left-0 top-[598px] flex text-center leading-[15px] text-white">
          <span className="w-[72px] px-1">VLC media player</span>
          <span className="w-[78px]">especiallyg...</span>
          <span className="w-[74px]">townrated....</span>
        </div>

        <TaskManager />

        <Explorer
          title="Startup"
          place="left-0 top-[10px]"
          frame="border-b border-[#2b7da8]"
          crumbs={['Windows', 'Start Menu', 'Programs', 'Startup']}
          search="Search Startup"
          searchId="search-startup"
          back
          tree={startupTree}
          scroll={{ before: 'h-[122px]', thumb: 'h-[25px]' }}
          file={{ icon: oneNote, name: 'Send to OneNote', date: '', type: '', size: '' }}
        />

        <Explorer
          title="Silo.S02E10.1080p.x265-ELiTE.mkv"
          active
          place="left-[309px] top-10"
          frame="border-white"
          crumbs={['Silo.S02E10.1080p.x265-ELiTE.mkv']}
          search="Search Silo.S02E10.1080p.x265..."
          searchId="search-silo"
          tree={siloTree}
          scroll={{ before: 'h-[234px]', thumb: 'h-[117px]' }}
          file={{ icon: vlc, name: 'Silo.S02E10.1080p.x265-ELiTE.mkv', date: '1/18/2025 2:40 AM', type: 'Shortcut', size: '2 KB' }}
        />

        <ContextMenu />

        <div className="pointer-events-none absolute left-[1038px] top-[608px] flex items-center font-['Liberation_Sans_Narrow','Roboto_Condensed',sans-serif] text-[40px] leading-[64px] text-[#cdd8f0] opacity-60">
          <span className="w-[72px]">ANY</span>
          <svg viewBox="0 0 56 64" className="h-16 w-14" fill="none" stroke="currentColor" strokeLinejoin="round" strokeLinecap="round" aria-hidden="true">
            <path d="M12 44V3L52 27" strokeWidth="4.500" />
            <path d="M14 61L53 36L16 13V44" strokeWidth="4" />
            <path d="M9 9L3 13V51L42 28" strokeWidth="3" />
            <path d="M12 53L46 33M14 61V56" strokeWidth="3" />
          </svg>
          <span className="pl-1">RUN</span>
        </div>
      </main>
      <Taskbar />
    </div>
  );
}
